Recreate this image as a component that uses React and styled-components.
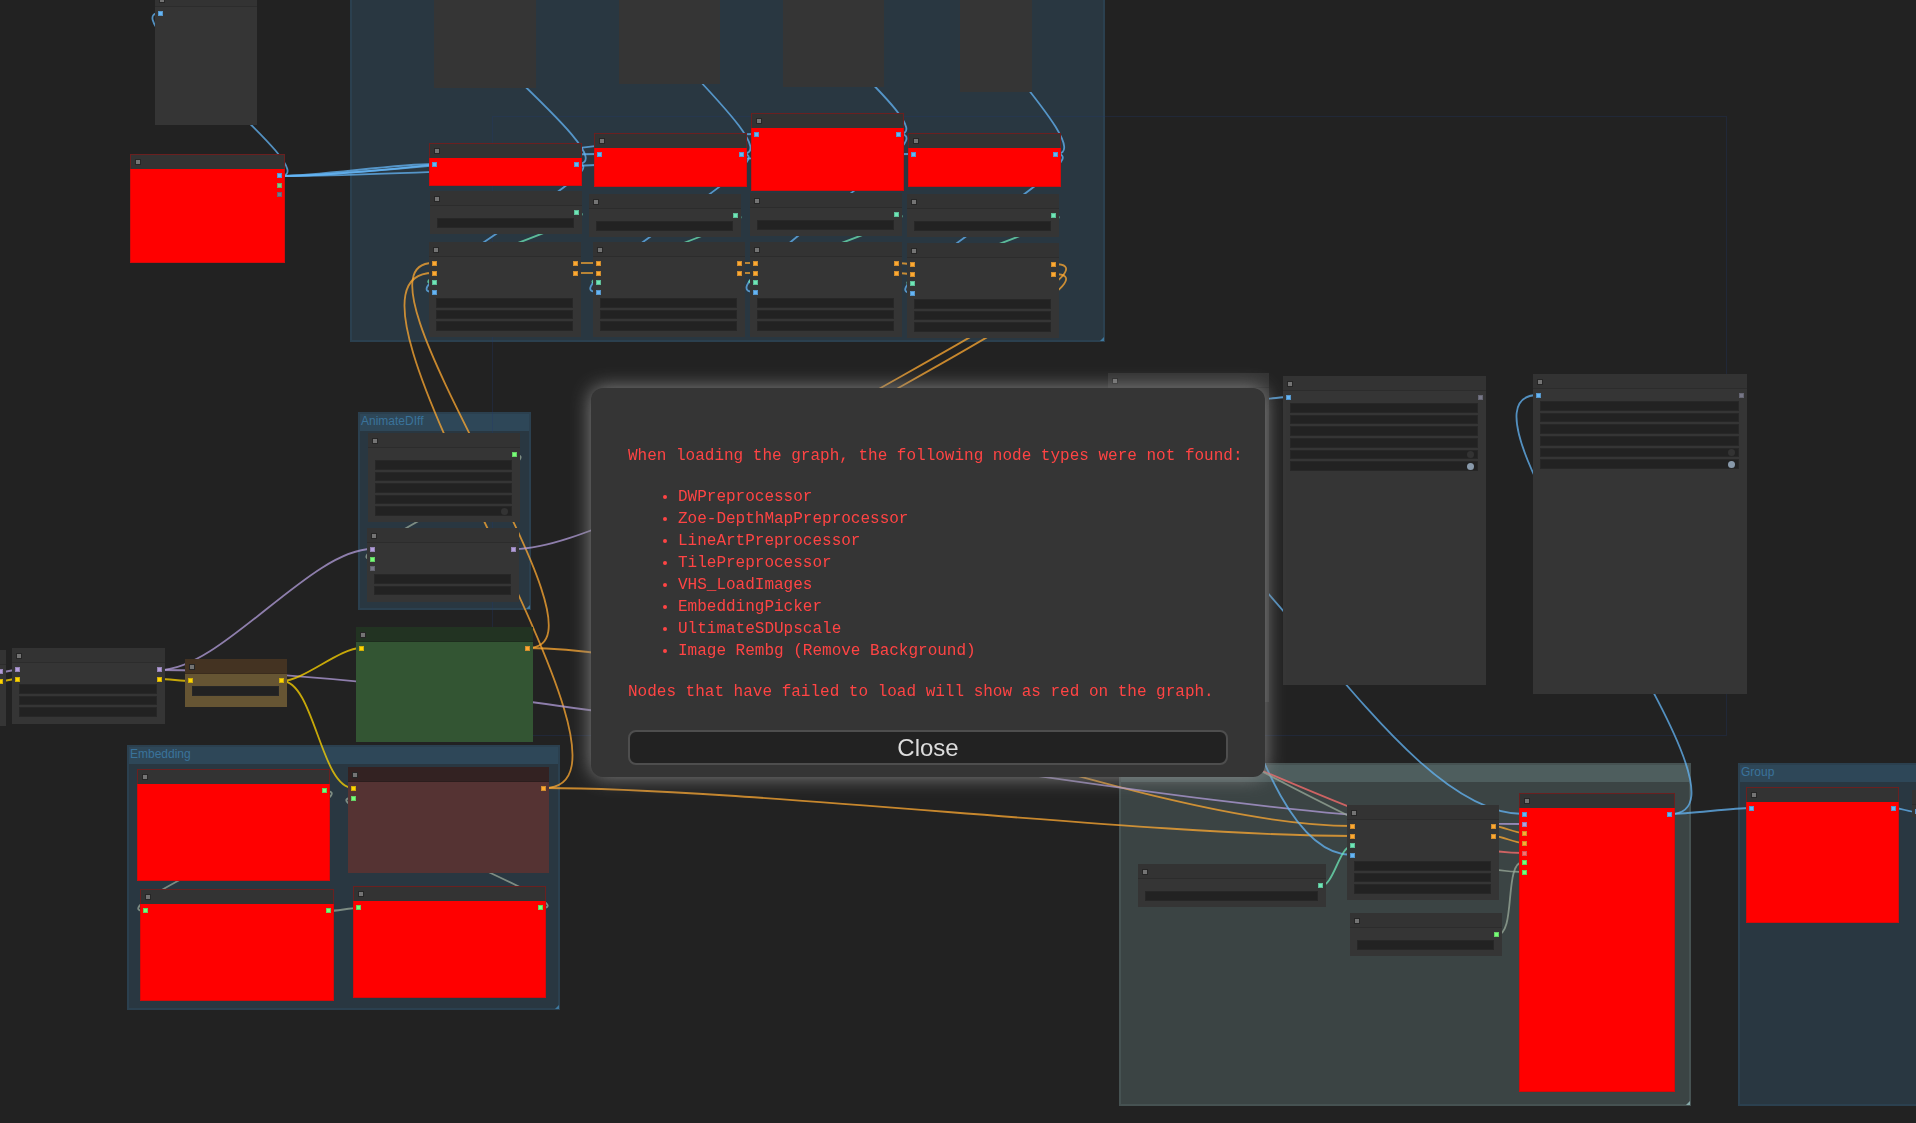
import React from "react";
import styled, { createGlobalStyle, css } from "styled-components";

const GlobalStyle = createGlobalStyle`
  * { box-sizing: border-box; }
  body {
    margin: 0;
    background: #222;
    overflow: hidden;
    font-family: "Liberation Sans", Arial, sans-serif;
  }
`;

/* ---------- graph data ---------- */

const C = {
  image: "#64b5f6",
  latentOut: "#ffa931",
  vae: "#ff6e6e",
  model: "#b39ddb",
  clip: "#ffd500",
  control: "#6ee7b7",
  any: "#77ff77",
  mask: "#81c784",
  off: "#777787",
  link: "#99aa99",
};

const DARK = { title: "#333333", body: "#353535" };
const RED = { title: "#333333", body: "#ff0000", missing: true };
const GREEN = { title: "#223322", body: "#335533" };
const BROWN = { title: "#443322", body: "#665533" };
const MAROON = { title: "#332222", body: "#553333" };

const SLOT_PITCH = 29 / 3;
const WIDGET_PITCH = 58 / 5;

const groups = [
  { x: 350, y: -40, r: 1105, b: 342, color: "63, 120, 158" },
  { x: 358, y: 412, r: 531, b: 610, color: "63, 120, 158", label: "AnimateDIff" },
  { x: 127, y: 745, r: 560, b: 1010, color: "63, 120, 158", label: "Embedding" },
  { x: 1119, y: 763, r: 1691, b: 1106, color: "136, 170, 170" },
  { x: 1738, y: 763, r: 2100, b: 1106, color: "63, 120, 158", label: "Group" },
];

const samplerIn = [C.latentOut, C.latentOut, C.control, C.image];
const samplerOut = [C.latentOut, C.latentOut];

const nodes = [
  { x: 155, y: -8, r: 257, b: 125, ins: [C.image], ...DARK },
  { x: 130, y: 154, r: 285, b: 263, outs: [C.image, C.mask, C.off], ...RED },

  { x: 434, y: -45, r: 536, b: 88, ...DARK },
  { x: 619, y: -49, r: 720, b: 84, ...DARK },
  { x: 783, y: -46, r: 884, b: 87, ...DARK },
  { x: 960, y: -41, r: 1032, b: 92, ...DARK },

  { x: 429, y: 143, r: 582, b: 186, ins: [C.image], outs: [C.image], ...RED },
  { x: 594, y: 133, r: 747, b: 187, ins: [C.image], outs: [C.image], ...RED },
  { x: 751, y: 113, r: 904, b: 191, ins: [C.image], outs: [C.image], ...RED },
  { x: 908, y: 133, r: 1061, b: 187, ins: [C.image], outs: [C.image], ...RED },

  { x: 430, y: 191, r: 582, b: 234, outs: [C.control], widgets: 1, ...DARK },
  { x: 589, y: 194, r: 741, b: 237, outs: [C.control], widgets: 1, ...DARK },
  { x: 750, y: 193, r: 902, b: 236, outs: [C.control], widgets: 1, ...DARK },
  { x: 907, y: 194, r: 1059, b: 237, outs: [C.control], widgets: 1, ...DARK },

  { x: 429, y: 242, r: 581, b: 337, ins: samplerIn, outs: samplerOut, widgets: 3, ...DARK },
  { x: 593, y: 242, r: 745, b: 337, ins: samplerIn, outs: samplerOut, widgets: 3, ...DARK },
  { x: 750, y: 242, r: 902, b: 337, ins: samplerIn, outs: samplerOut, widgets: 3, ...DARK },
  { x: 907, y: 243, r: 1059, b: 338, ins: samplerIn, outs: samplerOut, widgets: 3, ...DARK },

  { x: 368, y: 433, r: 520, b: 522, outs: [C.any], widgets: 5, toggles: { 4: "#333333" }, ...DARK },
  { x: 367, y: 528, r: 519, b: 602, ins: [C.model, C.any, C.off], outs: [C.model], widgets: 2, ...DARK },

  { x: 356, y: 627, r: 533, b: 742, ins: [C.clip], outs: [C.latentOut], ...GREEN },

  { x: -147, y: 650, r: 6, b: 726, outs: [C.model, C.clip], ...DARK },
  { x: 12, y: 648, r: 165, b: 724, ins: [C.model, C.clip], outs: [C.model, C.clip], widgets: 3, ...DARK },
  { x: 185, y: 659, r: 287, b: 707, ins: [C.clip], outs: [C.clip], widgets: 1, ...BROWN },

  { x: 137, y: 769, r: 330, b: 881, outs: [C.any], ...RED },
  { x: 348, y: 767, r: 549, b: 873, ins: [C.clip, C.any], outs: [C.latentOut], ...MAROON },
  { x: 140, y: 889, r: 334, b: 1001, ins: [C.any], outs: [C.any], ...RED },
  { x: 353, y: 886, r: 546, b: 998, ins: [C.any], outs: [C.any], ...RED },

  { x: 1108, y: 373, r: 1269, b: 702, ...DARK },
  { x: 1283, y: 376, r: 1486, b: 685, ins: [C.image], outs: [C.off], widgets: 6, toggles: { 4: "#333333", 5: "#8899aa" }, ...DARK },
  { x: 1533, y: 374, r: 1747, b: 694, ins: [C.image], outs: [C.off], widgets: 6, toggles: { 4: "#333333", 5: "#8899aa" }, ...DARK },

  { x: 1138, y: 864, r: 1326, b: 907, outs: [C.control], widgets: 1, ...DARK },
  { x: 1347, y: 805, r: 1499, b: 900, ins: samplerIn, outs: samplerOut, widgets: 3, ...DARK },
  { x: 1350, y: 913, r: 1502, b: 956, outs: [C.any], widgets: 1, ...DARK },
  {
    x: 1519, y: 793, r: 1675, b: 1092,
    ins: [C.image, C.model, C.latentOut, C.latentOut, C.vae, C.any, C.any],
    outs: [C.image], ...RED,
  },
  { x: 1746, y: 787, r: 1899, b: 923, ins: [C.image], outs: [C.image], ...RED },
  { x: 1912, y: 790, r: 2060, b: 817, ins: [C.image], ...DARK },
];

const links = [
  [280, 176, 434, 164, C.image],
  [280, 176, 599, 154, C.image],
  [280, 176, 756, 134, C.image],
  [280, 176, 913, 154, C.image],
  [280, 176, 160, 13, C.image],
  [577, 164, 439, -24, C.image],
  [742, 154, 624, -28, C.image],
  [899, 134, 788, -25, C.image],
  [1056, 154, 965, -20, C.image],
  [577, 164, 433, 292, C.image],
  [742, 154, 597, 292, C.image],
  [899, 134, 754, 292, C.image],
  [1056, 154, 912, 293, C.image],
  [577, 213, 433, 283, C.control],
  [736, 216, 597, 283, C.control],
  [897, 215, 754, 283, C.control],
  [1054, 216, 912, 284, C.control],
  [576, 263, 597, 263, C.latentOut],
  [576, 273, 597, 273, C.latentOut],
  [740, 263, 754, 263, C.latentOut],
  [740, 273, 754, 273, C.latentOut],
  [897, 263, 912, 264, C.latentOut],
  [897, 273, 912, 274, C.latentOut],
  [1054, 264, 748, 489, C.latentOut],
  [1054, 274, 748, 499, C.latentOut],
  [528, 648, 433, 263, C.latentOut],
  [544, 788, 433, 273, C.latentOut],
  [528, 648, 1352, 826, C.latentOut],
  [544, 788, 1352, 836, C.latentOut],
  [160, 670, 372, 549, C.model],
  [160, 670, 1523, 824, C.model],
  [515, 549, 754, 478, C.model],
  [1, 672, 17, 670, C.model],
  [1, 681, 17, 679, C.clip],
  [160, 679, 190, 681, C.clip],
  [282, 681, 361, 648, C.clip],
  [282, 681, 353, 788, C.clip],
  [515, 455, 372, 559, C.link],
  [325, 791, 145, 911, C.link],
  [329, 911, 358, 908, C.link],
  [541, 908, 353, 798, C.link],
  [1264, 399, 1288, 397, C.image],
  [1100, 474, 1523, 814, C.image],
  [1100, 474, 1352, 855, C.image],
  [1670, 814, 1538, 395, C.image],
  [1670, 814, 1751, 808, C.image],
  [1894, 808, 1916, 812, C.image],
  [1005, 690, 1523, 853, C.vae],
  [1003, 672, 1523, 872, C.link],
  [1321, 886, 1352, 846, C.control],
  [1497, 935, 1523, 862, C.link],
  [1494, 826, 1523, 833, C.latentOut],
  [1494, 836, 1523, 843, C.latentOut],
];

const missingTypes = [
  "DWPreprocessor",
  "Zoe-DepthMapPreprocessor",
  "LineArtPreprocessor",
  "TilePreprocessor",
  "VHS_LoadImages",
  "EmbeddingPicker",
  "UltimateSDUpscale",
  "Image Rembg (Remove Background)",
];

/* Horizontal spline whose handles are a quarter of the link length. */
const spline = ([x1, y1, x2, y2]) => {
  const reach = Math.hypot(x2 - x1, y2 - y1) / 4;
  return `M${x1} ${y1}C${x1 + reach} ${y1} ${x2 - reach} ${y2} ${x2} ${y2}`;
};

/* ---------- graph parts ---------- */

const Canvas = styled.main`
  position: relative;
  min-height: 100vh;
  overflow: hidden;
  background: #222;
`;

const placed = css`
  position: absolute;
  left: ${(p) => p.$x}px;
  top: ${(p) => p.$y}px;
  width: ${(p) => p.$w}px;
  height: ${(p) => p.$h}px;
`;

const GroupBox = styled.section`
  ${placed}
  background: rgba(${(p) => p.$color}, 0.25);
  border: 2px solid rgba(${(p) => p.$color}, 0.15);

  &::after {
    content: "";
    position: absolute;
    right: -1px;
    bottom: -1px;
    border: 2px solid rgb(${(p) => p.$color});
    border-top-color: transparent;
    border-left-color: transparent;
  }
`;

const GroupTitle = styled.h2`
  height: 17px;
  margin: 0;
  padding-left: 1px;
  background: rgba(${(p) => p.$color}, 0.25);
  color: #3a739b;
  font-size: 12px;
  font-weight: 400;
  line-height: 15px;
`;

const Wires = styled.svg`
  position: absolute;
  inset: 0;
  width: 100%;
  height: 100%;
  fill: none;
`;

const NodeBox = styled.article`
  ${placed}
  display: flex;
  flex-direction: column;
  background: ${(p) => p.$body};
  box-shadow: ${(p) => (p.$missing ? "inset 0 0 0 1px rgba(170, 20, 20, 0.5)" : "none")};
`;

const TitleBar = styled.header`
  display: flex;
  flex: none;
  align-items: center;
  height: 15px;
  padding-left: 4px;
  background: ${(p) => p.$title};
  border: 0 solid #6a2020;
  border-width: ${(p) => (p.$missing ? "1px 1px 0" : "0")};
  box-shadow: ${(p) => (p.$missing ? "none" : "inset 0 -1px 0 rgba(0, 0, 0, 0.12)")};
`;

const CollapseBox = styled.span`
  width: 6px;
  height: 6px;
  background: #747474;
  border: 1px solid #262626;
`;

const Slot = styled.span`
  position: absolute;
  top: ${(p) => p.$top}px;
  ${(p) => p.$side}: 3px;
  width: 5px;
  height: 5px;
  background: ${(p) => p.$color};
  box-shadow: inset 0 0 0 1px rgba(40, 40, 40, 0.22);
`;

const Widgets = styled.div`
  position: absolute;
  top: ${(p) => p.$top}px;
  left: 7px;
  right: 8px;
  height: ${(p) => p.$h}px;
  display: grid;
  grid-auto-rows: 1fr;
  row-gap: 2px;
`;

const Widget = styled.div`
  display: flex;
  align-items: center;
  justify-content: flex-end;
  padding-right: 3px;
  background: #222;
  border: 1px solid #272727;
`;

const Toggle = styled.span`
  width: 7px;
  height: 7px;
  border-radius: 50%;
  background: ${(p) => p.$color};
`;

function Group({ x, y, r, b, color, label }) {
  return (
    <GroupBox $x={x} $y={y} $w={r - x} $h={b - y} $color={color}>
      <GroupTitle $color={color}>{label}</GroupTitle>
    </GroupBox>
  );
}

function Node({ x, y, r, b, title, body, missing, ins = [], outs = [], widgets = 0, toggles = {} }) {
  const slotTop = (i) => Math.round(19 + i * SLOT_PITCH);
  const rows = Math.max(ins.length, outs.length);
  return (
    <NodeBox $x={x} $y={y} $w={r - x} $h={b - y} $body={body} $missing={missing}>
      <TitleBar $title={title} $missing={missing}>
        <CollapseBox />
      </TitleBar>
      {ins.map((color, i) => (
        <Slot key={`in${i}`} $side="left" $top={slotTop(i)} $color={color} />
      ))}
      {outs.map((color, i) => (
        <Slot key={`out${i}`} $side="right" $top={slotTop(i)} $color={color} />
      ))}
      {widgets > 0 && (
        <Widgets $top={Math.round(17 + rows * SLOT_PITCH)} $h={Math.round(widgets * WIDGET_PITCH - 2)}>
          {Array.from({ length: widgets }, (_, i) => (
            <Widget key={i}>{toggles[i] && <Toggle $color={toggles[i]} />}</Widget>
          ))}
        </Widgets>
      )}
    </NodeBox>
  );
}

/* ---------- dialog ---------- */

const Overlay = styled.div`
  position: fixed;
  inset: 0;
  display: flex;
  align-items: center;
  justify-content: center;
  padding: 42px 60px 0 0;
`;

const Dialog = styled.div`
  display: flex;
  flex-direction: column;
  width: 674px;
  max-width: 100%;
  padding: 57px 22px 12px 37px;
  background: #353535;
  border-radius: 12px;
  box-shadow: 0 0 20px #888;
`;

const Message = styled.div`
  color: #ff4444;
  font-family: "Liberation Mono", "Courier New", monospace;
  font-size: 16px;
  line-height: 22px;
`;

const Line = styled.p`
  margin: 0;
`;

const TypeList = styled.ul`
  margin: 19px 0;
  padding-left: 50px;
`;

const CloseButton = styled.button`
  height: 35px;
  margin: 27px 15px 0 0;
  padding: 0;
  background: #222;
  color: #ddd;
  border: 2px solid #4e4e4e;
  border-radius: 8px;
  font-family: "Liberation Sans", Arial, sans-serif;
  font-size: 24px;
  line-height: 28px;
  cursor: pointer;
`;

export default function App() {
  return (
    <Canvas>
      <GlobalStyle />
      {groups.map((g, i) => (
        <Group key={i} {...g} />
      ))}
      <Wires aria-hidden="true">
        <rect x="492.5" y="116.5" width="1234" height="619" stroke="#22386e" strokeOpacity="0.3" />
        {links.map((l, i) => (
          <path key={i} d={spline(l)} stroke={l[4]} strokeWidth="1.8" strokeOpacity="0.75" />
        ))}
      </Wires>
      {nodes.map((n, i) => (
        <Node key={i} {...n} />
      ))}
      <Overlay>
        <Dialog role="dialog" aria-modal="true" aria-labelledby="missing-nodes">
          <Message>
            <Line id="missing-nodes">When loading the graph, the following node types were not found:</Line>
            <TypeList>
              {missingTypes.map((t) => (
                <li key={t}>{t}</li>
              ))}
            </TypeList>
            <Line>Nodes that have failed to load will show as red on the graph.</Line>
          </Message>
          <CloseButton type="button">Close</CloseButton>
        </Dialog>
      </Overlay>
    </Canvas>
  );
}
